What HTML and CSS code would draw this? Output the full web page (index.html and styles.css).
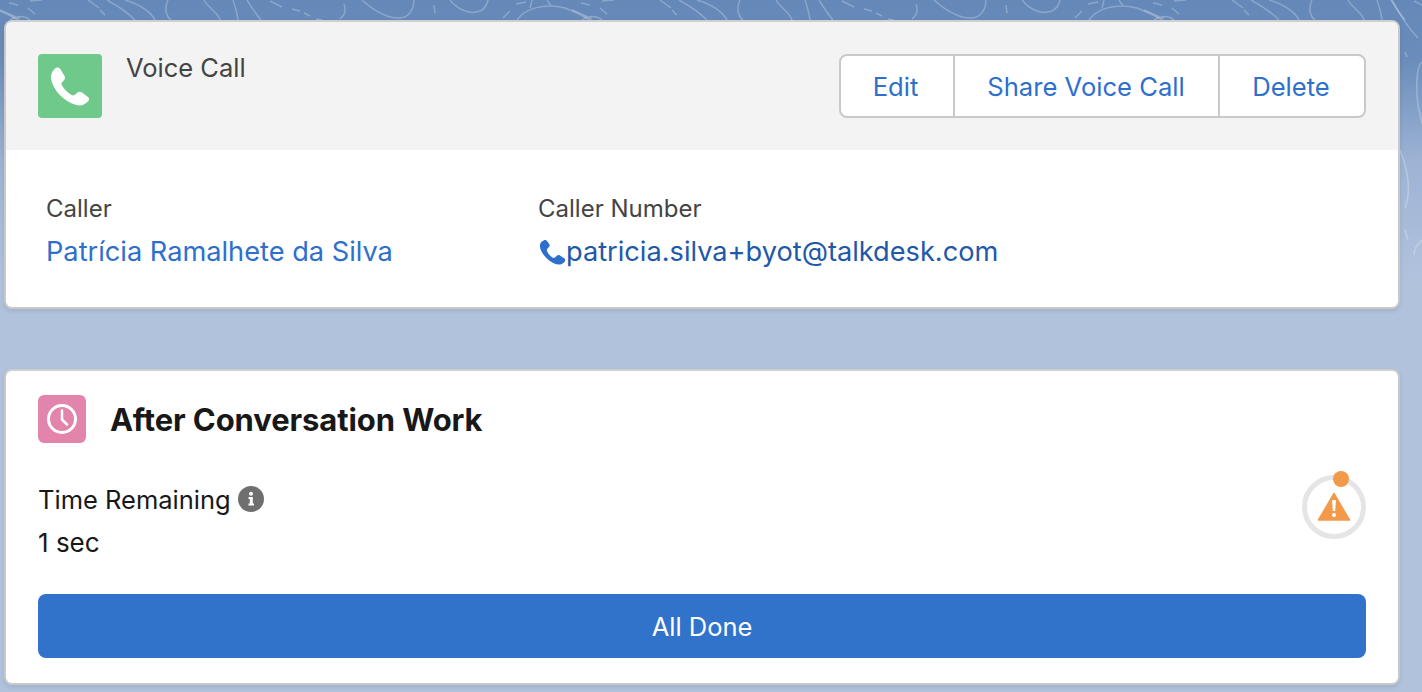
FILE: index.html
```html
<!DOCTYPE html>
<html lang="en">
<head>
<meta charset="utf-8">
<title>Voice Call</title>
<link rel="stylesheet" href="styles.css">
</head>
<body>
<svg class="contours" width="1422" height="340" viewBox="0 0 1422 340" aria-hidden="true">
  <defs>
    <g id="tile">
      <path d="M9 3L18 5M30 1L42 0M0 10C8 13 15 17 20 19M10 20C18 15 24 15 30 20M28 8L35 14"/>
      <path d="M88 0L99 8M100 10L105 15M107 0C118 6 128 13 135 20M125 0C138 4 150 11 155 20"/>
      <path d="M168 0C164 8 166 16 171 20M204 0C208 8 218 12 220 20M233 0C236 8 237 14 238 20M247 0C252 8 256 14 261 20"/>
      <path d="M270 1L282 7M292 9L300 11M304 13L310 16M344 4C346 10 346 14 340 19M316 19L322 20"/>
      <path d="M362 0C375 12 390 19 400 18C410 17 414 8 414 0M434 5L435 13M450 0C458 10 470 15 480 11C484 9 487 5 488 0"/>
      <path d="M503 18L510 11M516 4L526 2M530 8L532 0M547 0L551 6M517 20C525 8 545 3 565 8C575 12 585 17 590 20"/>
    </g>
  </defs>
  <g class="contour-lines">
    <use href="#tile" x="-572"/>
    <use href="#tile" x="0"/>
    <use href="#tile" x="572"/>
    <use href="#tile" x="1144"/>
    <path d="M1392 0C1400 15 1410 30 1418 38M1405 52L1407 57M1422 62C1416 66 1416 90 1418 105C1420 115 1422 122 1422 124M1400 150C1408 170 1412 190 1405 208M1405 230L1408 240M1422 240C1416 245 1414 250 1414 255"/>
  </g>
</svg>
<main class="stack">
  <section class="card">
    <header class="record-head">
      <div class="record-title">
        <span class="tile tile-green">
          <svg viewBox="0 0 64 64" width="64" height="64" aria-hidden="true"><path fill="#fff" d="M16.500 15C18 13.300 20.500 13 22 14.500L26.500 22C27.300 23.500 27 25 26 26.300L24 28.500C23.300 29.500 23.300 30.500 24 31.500C26.500 35.500 30 39 33.500 41C34.800 41.700 36 41.500 37 40.700L39.500 38.500C40.800 37.500 42.500 37.500 44 38.500L50 43C51.500 44.300 51.500 46 50 47.300C47.500 50 45 51.500 41.500 51.500C27 49.500 14.500 36 13 24C12.700 20.500 14 17.500 16.500 15Z"/></svg>
        </span>
        <h1 class="record-name">Voice Call</h1>
      </div>
      <div class="btn-group">
        <a class="btn btn-edit">Edit</a>
        <a class="btn btn-share">Share Voice Call</a>
        <a class="btn btn-delete">Delete</a>
      </div>
    </header>
    <div class="fields">
      <div class="field field-caller">
        <div class="field-label">Caller</div>
        <a class="field-link">Patrícia Ramalhete da Silva</a>
      </div>
      <div class="field">
        <div class="field-label">Caller Number</div>
        <div class="phone">
          <svg viewBox="0 0 28 28" width="28" height="28" aria-hidden="true"><path fill="#2e6fcc" d="M5.500 2.500C3 3.700 1.500 5.500 2 9C3 16 11.500 25 20 26.500C22.500 26.800 24.500 26 26 24.500C27.500 23 27.600 21.500 26.500 20.500L22 17.500C21 16.800 19.700 17 18.800 17.800L17 19.500C16.300 20 15.300 20 14.500 19.500C12 18 10 15.500 9 13C8.700 12.200 8.800 11.300 9.500 10.600L11 9C11.800 8.200 11.900 7 11.300 6L8.800 2.800C7.800 1.800 6.800 1.900 5.500 2.500Z"/></svg>
          <a class="phone-text">patricia.silva+byot@talkdesk.com</a>
        </div>
      </div>
    </div>
  </section>
  <section class="card work">
    <div class="work-head">
      <span class="tile-small tile-pink">
        <svg viewBox="0 0 48 48" width="48" height="48" aria-hidden="true"><circle cx="24" cy="24" r="13.500" fill="none" stroke="#fff" stroke-width="3"/><path d="M24 15.500V24.500L29 29.500" fill="none" stroke="#fff" stroke-width="2.500" stroke-linecap="round" stroke-linejoin="round"/></svg>
      </span>
      <h2 class="work-title">After Conversation Work</h2>
    </div>
    <div class="work-row">
      <div class="timer-text">
        <div class="timer-label">Time Remaining
          <svg class="info" viewBox="0 0 26 26" width="26" height="26" aria-hidden="true"><circle cx="13" cy="13" r="13" fill="#6f6f6f"/><circle cx="13" cy="7.800" r="2" fill="#fff"/><path fill="#fff" d="M10.500 11H14.800V17.500H16V19.500H10.500V17.500H11.800V13H10.500Z"/></svg>
        </div>
        <div class="timer-value">1 sec</div>
      </div>
      <div class="ring">
        <svg viewBox="0 0 64 72" width="64" height="72" aria-hidden="true">
          <circle cx="32" cy="40" r="29.500" fill="none" stroke="#e5e5e5" stroke-width="5"/>
          <circle cx="39" cy="12" r="8" fill="#f2994a"/>
          <path fill="#f2994a" stroke="#f2994a" stroke-width="1.500" stroke-linejoin="round" d="M32 26.500L47.500 53H16.500Z"/>
          <path fill="#fff" d="M30 33H34L33.200 44H30.800Z"/>
          <circle cx="32" cy="48" r="2" fill="#fff"/>
        </svg>
      </div>
    </div>
    <button class="done" type="button">All Done</button>
  </section>
</main>
</body>
</html>
```
FILE: styles.css
```css
* { box-sizing: border-box; }
html, body { margin: 0; height: 100%; }
body {
  position: relative;
  overflow: hidden;
  font-family: Inter, "Liberation Sans", sans-serif;
  background: linear-gradient(180deg, #6488b8 0, #6a8dbb 60px, #9db3d4 160px, #b1c2dd 280px, #b1c2dd 100%);
  color: #181818;
}
.contours {
  position: absolute;
  left: 0;
  top: 0;
}
.contour-lines {
  fill: none;
  stroke: #fff;
  stroke-opacity: .26;
  stroke-width: 1.5;
}
.stack {
  position: relative;
  display: flex;
  flex-direction: column;
  gap: 60px;
  padding: 20px 22px 0 4px;
}
.card {
  background: #fff;
  border: 2px solid #c9c9c9;
  border-top-color: #cfcfcf;
  border-radius: 8px;
  box-shadow: 0 2px 4px rgba(0, 0, 0, .1);
  overflow: hidden;
}
.record-head {
  display: flex;
  justify-content: space-between;
  height: 128px;
  padding: 32px;
  background: #f3f3f3;
}
.record-title { display: flex; gap: 24px; }
.tile {
  display: block;
  width: 64px;
  height: 64px;
  border-radius: 4px;
}
.tile svg, .tile-small svg { display: block; }
.tile-green { background: #6fc98a; }
.record-name {
  margin: 0;
  font-size: 25.500px;
  font-weight: 400;
  line-height: 28px;
  color: #444;
}
.btn-group {
  display: flex;
  height: 64px;
  border: 2px solid #c9c9c9;
  border-radius: 8px;
  background: #fff;
}
.btn {
  display: flex;
  align-items: center;
  justify-content: center;
  font-size: 25.600px;
  color: #2e6fcc;
}
.btn-edit { width: 112px; padding-right: 3px; }
.btn-share { width: 267px; padding-right: 1px; border-left: 2px solid #c9c9c9; border-right: 2px solid #c9c9c9; }
.btn-delete { width: 144px; padding-right: 2px; }
.fields {
  display: flex;
  height: 157px;
  padding: 44px 0 0 40px;
}
.field-caller { width: 492px; }
.field-label {
  font-size: 24px;
  line-height: 30px;
  color: #444;
}
.field-link {
  display: block;
  margin-top: 12px;
  font-size: 27.200px;
  line-height: 32px;
  color: #2e6fcc;
}
.phone {
  display: flex;
  align-items: center;
  margin-top: 12px;
  height: 32px;
}
.phone svg { flex: none; }
.phone-text { font-size: 27.200px; line-height: 32px; color: #2258a8; }
.work { height: 316px; padding: 24px 32px 0 32px; }
.work-head { display: flex; align-items: center; gap: 24px; height: 48px; }
.tile-small {
  display: block;
  width: 48px;
  height: 48px;
  border-radius: 6px;
}
.tile-pink { background: #e384ad; }
.work-title {
  margin: 0;
  padding-top: 2px;
  font-size: 31px;
  font-weight: 700;
  line-height: 46px;
  letter-spacing: -.1px;
  color: #181818;
}
.work-row {
  display: flex;
  justify-content: space-between;
  height: 103px;
  margin-top: 24px;
}
.timer-label {
  display: flex;
  align-items: center;
  gap: 7px;
  height: 36px;
  margin-top: 14px;
  font-size: 25.500px;
}
.timer-value { margin-top: 8px; font-size: 26px; line-height: 36px; }
.ring { height: 72px; }
.ring svg { display: block; }
.done {
  display: block;
  width: 100%;
  height: 64px;
  margin-top: 24px;
  padding: 0;
  border: 0;
  border-radius: 8px;
  background: #3173cb;
  color: #fff;
  font: 400 25.500px Inter, "Liberation Sans", sans-serif;
}
```
